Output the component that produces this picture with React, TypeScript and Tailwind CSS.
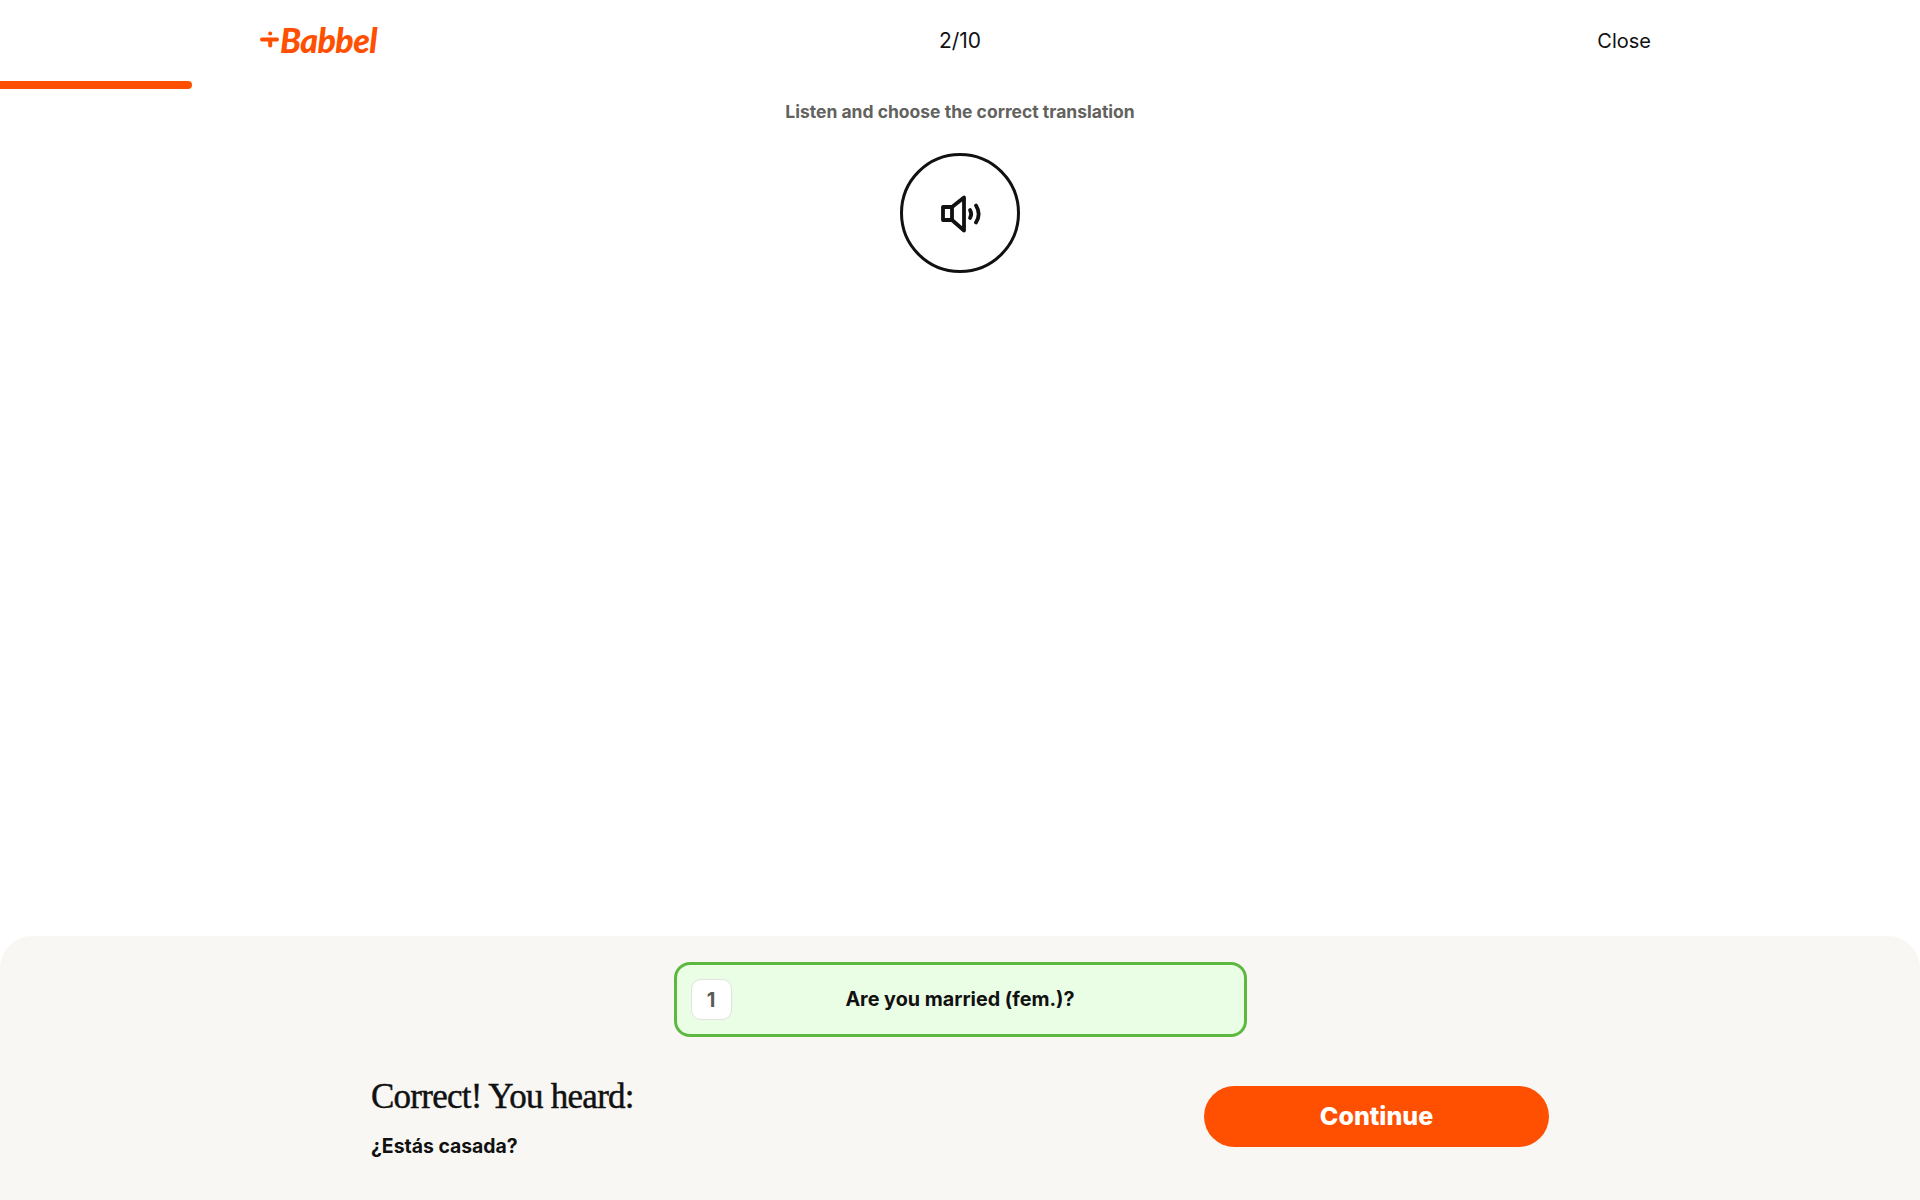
import React from "react";

function Speaker() {
  return (
    <svg width="42" height="38" viewBox="0 0 42 38" fill="none" stroke="#111" strokeLinejoin="round" strokeLinecap="round">
      <path d="M2 12h9v13H2z" strokeWidth="3.8" />
      <path d="M11 12 23 2.5v33L11 25" strokeWidth="3.8" />
      <path d="M29 15c1.6 2.6 1.6 5.4 0 8" strokeWidth="3.8" />
      <path d="M35 10.5c3.4 5.4 3.4 11.6 0 17" strokeWidth="3.8" />
    </svg>
  );
}

function Logo() {
  return (
    <div className="flex items-center text-[#ff4f00] relative top-[-1px]">
      <svg width="20" height="20" viewBox="0 0 20 20" fill="#ff4f00">
        <rect x="0" y="7.5" width="19" height="4" rx="2" />
        <rect x="8.2" y="1.5" width="4" height="4" rx="2" />
        <rect x="8.2" y="9" width="4" height="8.5" rx="2" />
      </svg>
      <span className="font-['Lato',sans-serif] font-black italic text-[34px] leading-none tracking-[-0.6px]">Babbel</span>
    </div>
  );
}

export default function App() {
  return (
    <div className="h-screen flex flex-col bg-white font-['Inter',sans-serif] text-[#111] overflow-hidden">
      <header className="h-[81px] shrink-0 grid grid-cols-3 items-center pl-[260px] pr-[270px]">
        <div className="justify-self-start"><Logo /></div>
        <div className="justify-self-center text-[21px] relative left-[5px]">2/10</div>
        <div className="justify-self-end text-[20px] relative left-[1px]">Close</div>
      </header>
      <div className="h-2 w-[192px] bg-[#ff4f00] rounded-r-full shrink-0" />
      <main className="flex-1 flex flex-col items-center">
        <p className="mt-[11px] text-[17.5px] leading-[24px] font-bold text-[#62625e]">Listen and choose the correct translation</p>
        <button className="mt-[29px] w-[120px] h-[120px] rounded-full border-[3px] border-[#111] flex items-center justify-center">
          <span className="relative left-[2px] top-[1px]"><Speaker /></span>
        </button>
      </main>
      <section className="h-[264px] shrink-0 bg-[#f8f7f4] rounded-t-[32px] flex flex-col items-center pt-[26px]">
        <div className="w-[573px] h-[75px] rounded-[16px] border-[3px] border-[#5cb83f] bg-[#eafde5] flex items-center relative">
          <div className="absolute left-[14px] top-[14px] w-[41px] h-[41px] rounded-[10px] bg-white border border-[#e3e3de] flex items-center justify-center text-[20px] font-bold text-[#5a5a57]">1</div>
          <div className="w-full text-center text-[19.75px] font-bold">Are you married (fem.)?</div>
        </div>
        <div className="w-[1178px] mt-[40px] flex justify-between items-start">
          <div>
            <h2 className="font-['Liberation_Serif',serif] text-[35px] leading-[40px] font-normal tracking-[-0.75px] [-webkit-text-stroke:0.45px_#111]">Correct! You heard:</h2>
            <p className="mt-[15px] text-[19.4px] leading-[28px] font-bold">¿Estás casada?</p>
          </div>
          <button className="mt-[9px] w-[345px] h-[61px] rounded-full bg-[#ff4f00] text-white text-[25px] font-extrabold">Continue</button>
        </div>
      </section>
    </div>
  );
}
